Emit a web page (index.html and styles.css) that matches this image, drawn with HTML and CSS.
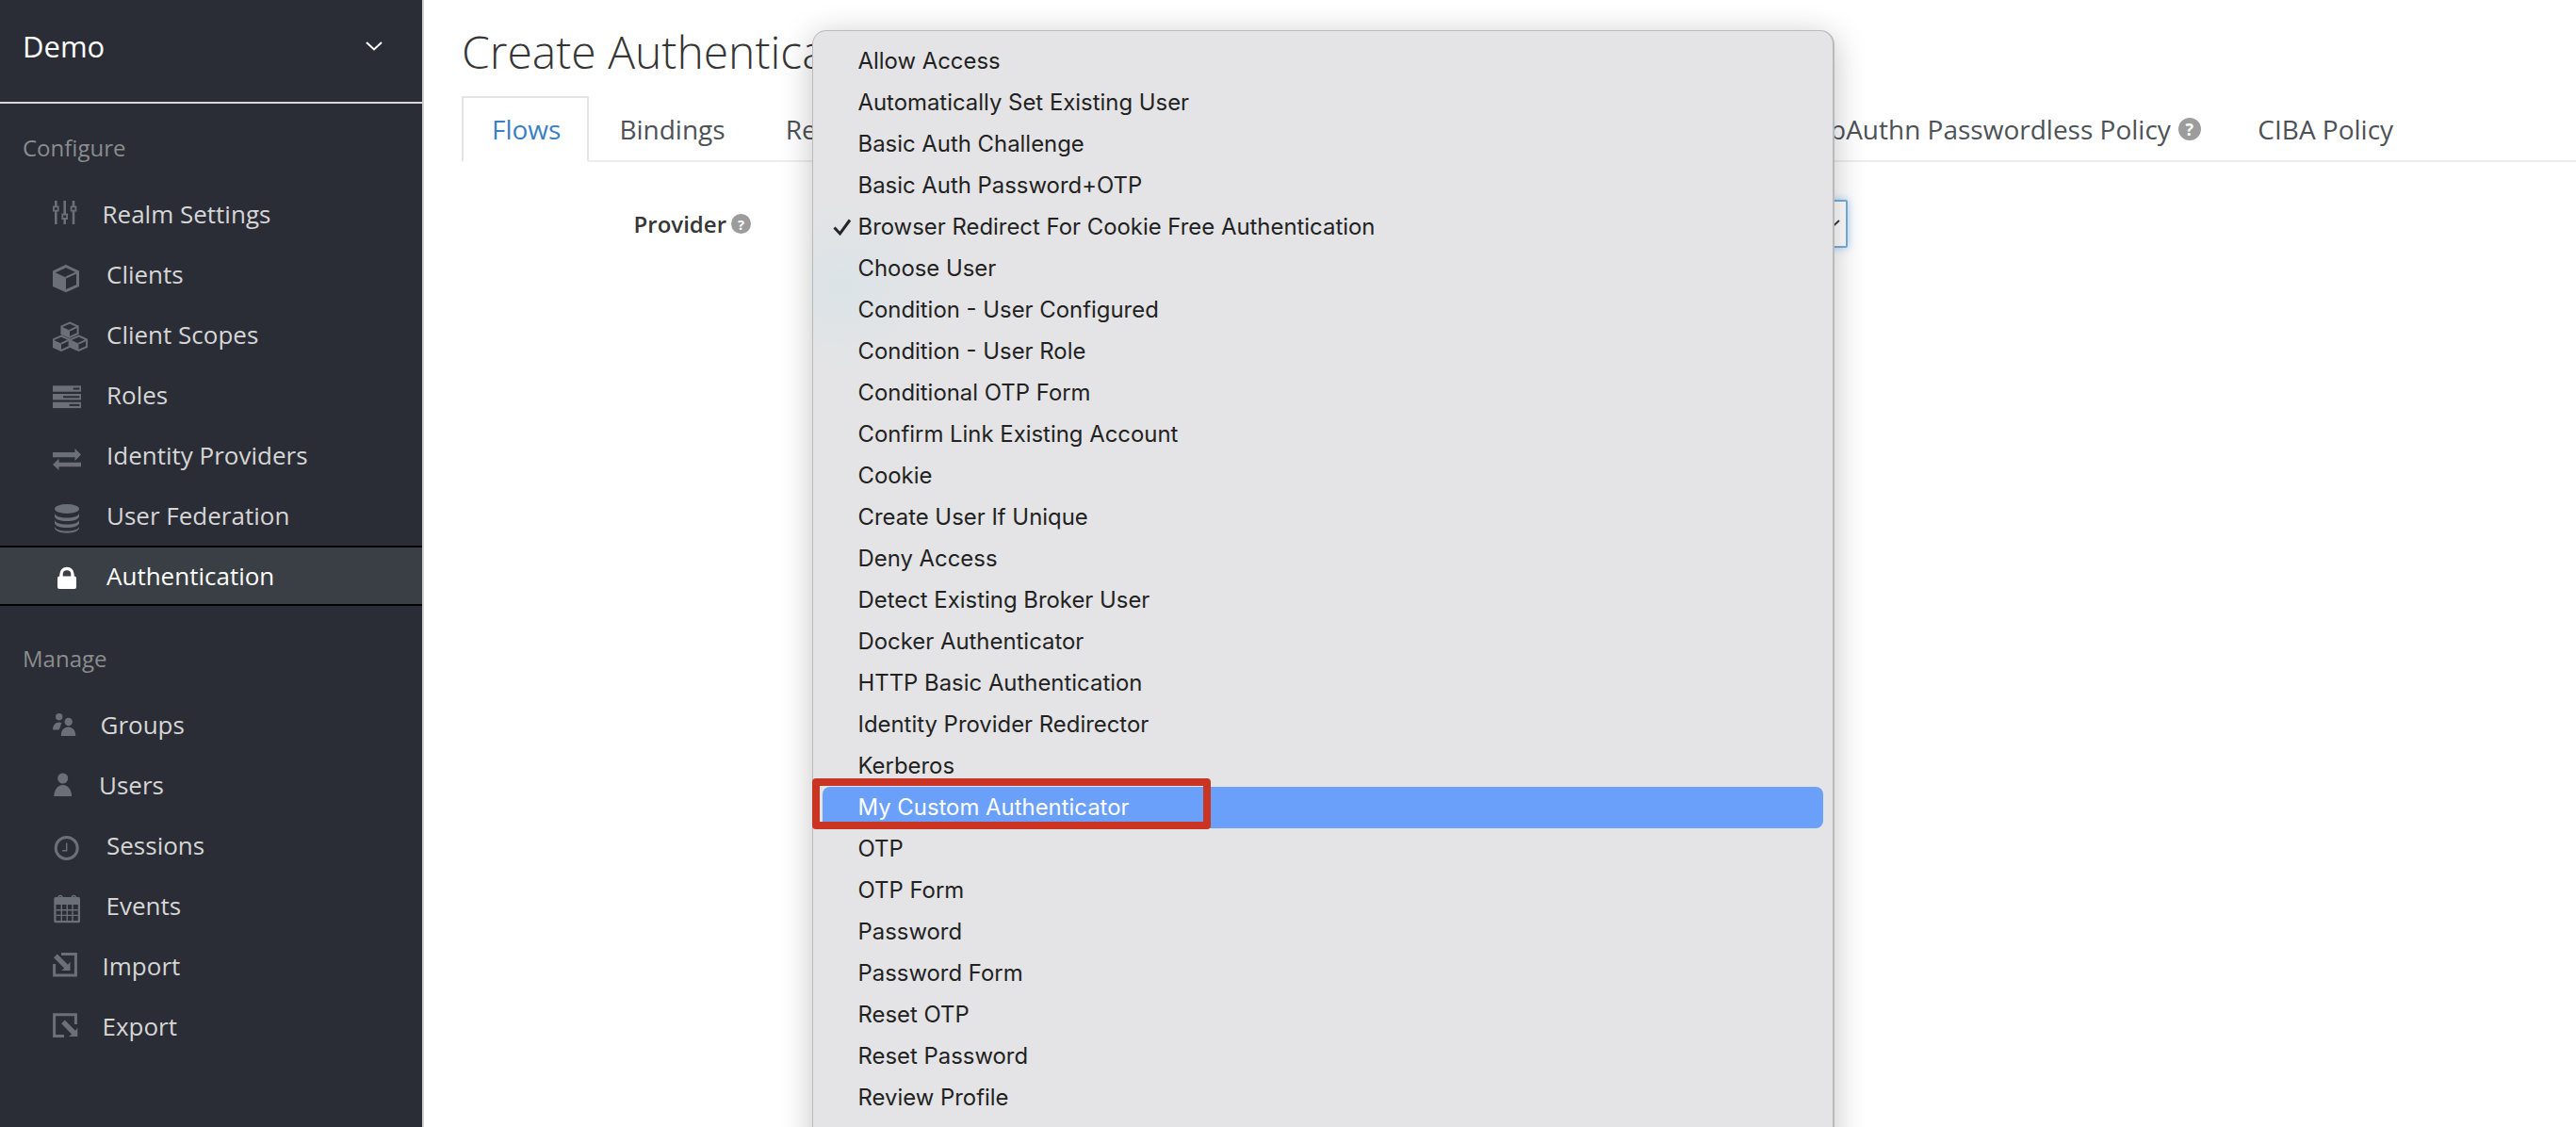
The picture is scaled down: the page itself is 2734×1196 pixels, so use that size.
FILE: index.html
```html
<!DOCTYPE html>
<html lang="en">
<head>
<meta charset="utf-8">
<title>Create Authenticator Execution</title>
<link rel="stylesheet" href="styles.css">
</head>
<body>
<div class="app">
  <aside class="sidebar">
    <header class="realm">
      <span class="realm-name">Demo</span>
      <svg class="realm-chevron" width="18" height="10" viewBox="0 0 18 10"><path d="M1 1l8 7.5L17 1" fill="none" stroke="#fff" stroke-width="2"/></svg>
    </header>
    <h2 class="section-title first">Configure</h2>
    <nav class="nav">
      <a class="nav-item to-54"><span class="nav-icon"><svg width="40" height="44" viewBox="0 0 40 44"><g class="ico"><rect x="2" y="8" width="2.6" height="25"/><rect x="11.400" y="8" width="2.6" height="25"/><rect x="20.700" y="8" width="2.6" height="25"/><rect x="0" y="13.500" width="6.600" height="6"/><rect x="9.400" y="21.500" width="6.600" height="6.500"/><rect x="18.700" y="13.500" width="6.600" height="6"/></g><g class="ico-knob"><rect x="1.800" y="15.300" width="3" height="2.400"/><rect x="11.200" y="23.500" width="3" height="2.500"/><rect x="20.500" y="15.300" width="3" height="2.400"/></g></svg></span><span>Realm Settings</span></a>
      <a class="nav-item to-57"><span class="nav-icon"><svg width="40" height="44" viewBox="0 0 40 44"><path class="ico-line" d="M14 13.5L26.5 19.5V34L14 39.5 1.5 34V19.5z"/><path class="ico" d="M1 19.5L14 25.5V40L1 34z"/><path class="ico-line thin" d="M14 25.5L27 19.5"/></svg></span><span>Clients</span></a>
      <a class="nav-item to-57"><span class="nav-icon"><svg width="40" height="44" viewBox="0 0 40 44"><defs><g id="cube"><path class="ico-line thin" d="M0-7.5L8.6-3.6V4L0 7.8-8.6 4V-3.6z"/><path class="ico" d="M-9-3.6L0 .6V8.6L-9 4.4z"/><path class="ico-line thin" d="M0 .6L9-3.6"/></g></defs><use href="#cube" x="18" y="17"/><use href="#cube" x="9" y="31"/><use href="#cube" x="27.5" y="31"/></svg></span><span>Client Scopes</span></a>
      <a class="nav-item to-57"><span class="nav-icon"><svg width="40" height="44" viewBox="0 0 40 44"><g class="ico"><rect x="0" y="12.3" width="30" height="6.4"/><rect x="0" y="21" width="30" height="6.4"/><rect x="0" y="29.7" width="30" height="6.4"/></g><g class="ico-knob"><rect x="21.7" y="14.5" width="6.6" height="2"/><rect x="11" y="23.2" width="17.3" height="2"/><rect x="17.7" y="31.9" width="10.6" height="2"/></g></svg></span><span>Roles</span></a>
      <a class="nav-item to-57"><span class="nav-icon"><svg width="40" height="44" viewBox="0 0 40 44"><path class="ico" d="M0 19H23.5V15L30 21.5 23.5 28V24.3H0zM30 29.7H6.5V25.7L0 32 6.5 38V34.3H30z"/></svg></span><span>Identity Providers</span></a>
      <a class="nav-item to-57"><span class="nav-icon"><svg width="40" height="44" viewBox="0 0 40 44"><ellipse class="ico" cx="15" cy="15" rx="13" ry="5"/><path class="ico" d="M2 19.5c0 3 6 5 13 5s13-2 13-5v3.5c0 3-6 5-13 5s-13-2-13-5zM2 26.5c0 3 6 5 13 5s13-2 13-5v3.5c0 3-6 5-13 5s-13-2-13-5zM2 33.5c0 3 6 5 13 5s13-2 13-5v1.5c0 3.5-6 5.7-13 5.7s-13-2.2-13-5.7z"/></svg></span><span>User Federation</span></a>
      <a class="nav-item active to-57"><span class="nav-icon"><svg width="40" height="44" viewBox="0 0 40 44"><path d="M9 23v-2.500c0-3.500 2.500-6 6-6s6 2.500 6 6V23" fill="none" stroke="#fff" stroke-width="3.400"/><rect x="5" y="22.500" width="20" height="13.500" rx="2" fill="#fff"/></svg></span><span>Authentication</span></a>
    </nav>
    <h2 class="section-title second">Manage</h2>
    <nav class="nav">
      <a class="nav-item to-51"><span class="nav-icon"><svg width="40" height="44" viewBox="0 0 40 44"><g class="ico"><circle cx="6.700" cy="13.700" r="3.700"/><circle cx="16.700" cy="19" r="4.200"/><path d="M8.800 34c0-6 3-9.500 7.700-9.500s7.700 3.500 7.700 9.500zM0 27.500C0 22.500 3 19.500 6.500 19.500c1 0 2 .3 3 .8-1.300 2.200-1 4-3 7.200z"/></g></svg></span><span>Groups</span></a>
      <a class="nav-item to-50"><span class="nav-icon"><svg width="40" height="44" viewBox="0 0 40 44"><g class="ico"><circle cx="10.700" cy="15" r="5.500"/><path d="M1.300 34c0-7 4-12 9.400-12s9.400 5 9.400 12z"/></g></svg></span><span>Users</span></a>
      <a class="nav-item to-57"><span class="nav-icon"><svg width="40" height="44" viewBox="0 0 40 44"><circle class="ico-line" cx="14.700" cy="25" r="11.500"/><path class="ico-line hair" d="M14.700 19.500v8.200h-4.500"/></svg></span><span>Sessions</span></a>
      <a class="nav-item to-58"><span class="nav-icon"><svg width="40" height="44" viewBox="0 0 40 44"><rect class="ico" x="1.300" y="13" width="27.700" height="27.300" rx="1.500"/><path class="ico-line hair" d="M6 18v-4.500a2 2 0 0 1 4 0V18M20.300 18v-4.500a2 2 0 0 1 4 0V18"/><rect class="ico-knob" x="3.500" y="21" width="23.300" height="17"/><path class="ico-line hair" d="M9.300 21v17M15.200 21v17M21 21v17M3.500 26.700h23.300M3.500 32.400h23.300"/></svg></span><span>Events</span></a>
      <a class="nav-item to-54"><span class="nav-icon"><svg width="40" height="44" viewBox="0 0 40 44"><path class="ico-line" d="M9 9.400H24.400V32H1.600V20"/><path class="ico" d="M4.800 9.500L16 20.700l2.500-3V27H9.200l3-2.500L1 13.300z"/></svg></span><span>Import</span></a>
      <a class="nav-item to-54"><span class="nav-icon"><svg width="40" height="44" viewBox="0 0 40 44"><path class="ico-line" d="M24.400 20V9.700H1.600V32.400H12"/><path class="ico" d="M12.800 15.500L24 26.700l2.300-3V33H17l3-2.500L9.200 19.300z"/></svg></span><span>Export</span></a>
    </nav>
  </aside>
  <main class="main">
    <h1 class="page-title">Create Authenticator Execution</h1>
    <ul class="tabs">
      <li class="tab current">Flows</li>
      <li class="tab">Bindings</li>
      <li class="tab">Required Actions</li>
      <li class="tab">Password Policy</li>
      <li class="tab tight">OTP Policy</li>
      <li class="tab">WebAuthn Policy <span class="help">?</span></li>
      <li class="tab narrow-end">WebAuthn Passwordless Policy <span class="help">?</span></li>
      <li class="tab">CIBA Policy</li>
    </ul>
    <form class="form">
      <label class="form-label">Provider <span class="help small">?</span></label>
      <div class="select"><svg width="18" height="10" viewBox="0 0 18 10"><path d="M1 1l8 7.500L17 1" fill="none" stroke="#333" stroke-width="1.800"/></svg></div>
    </form>
    <div class="menu">
      <div class="menu-item">Allow Access</div>
      <div class="menu-item">Automatically Set Existing User</div>
      <div class="menu-item">Basic Auth Challenge</div>
      <div class="menu-item">Basic Auth Password+OTP</div>
      <div class="menu-item"><svg class="check" width="20" height="20" viewBox="0 0 20 20"><path d="M1.500 10.500L7.500 17 18 2.500" fill="none" stroke="#262626" stroke-width="3"/></svg>Browser Redirect For Cookie Free Authentication</div>
      <div class="menu-item">Choose User</div>
      <div class="menu-item">Condition - User Configured</div>
      <div class="menu-item">Condition - User Role</div>
      <div class="menu-item">Conditional OTP Form</div>
      <div class="menu-item">Confirm Link Existing Account</div>
      <div class="menu-item">Cookie</div>
      <div class="menu-item">Create User If Unique</div>
      <div class="menu-item">Deny Access</div>
      <div class="menu-item">Detect Existing Broker User</div>
      <div class="menu-item">Docker Authenticator</div>
      <div class="menu-item">HTTP Basic Authentication</div>
      <div class="menu-item">Identity Provider Redirector</div>
      <div class="menu-item">Kerberos</div>
      <div class="menu-item selected">My Custom Authenticator<span class="annotation"></span></div>
      <div class="menu-item">OTP</div>
      <div class="menu-item">OTP Form</div>
      <div class="menu-item">Password</div>
      <div class="menu-item">Password Form</div>
      <div class="menu-item">Reset OTP</div>
      <div class="menu-item">Reset Password</div>
      <div class="menu-item">Review Profile</div>
    </div>
  </main>
</div>
</body>
</html>
```
FILE: styles.css
```css
* { box-sizing: border-box; }
html, body { margin: 0; height: 100%; overflow: hidden; }
body { font-family: "Open Sans", "Liberation Sans", sans-serif; background: #fff; color: #363636; }
.app { display: flex; height: 1196px; overflow: hidden; }

.sidebar { width: 450px; flex: none; background: #2a2d35; border-right: 2px solid #d1d1d1; color: #d6d6d6; }
.realm { height: 110px; display: flex; align-items: center; justify-content: space-between; padding: 0 42px 10px 24px; border-bottom: 2px solid #d8d8d8; }
.realm-name { font-size: 31px; color: #fff; }
.section-title { margin: 0; height: 74px; display: flex; align-items: center; padding: 0 0 3px 24px; font-size: 24px; font-weight: 400; color: #8a8c8e; }
.section-title.first { margin-top: 11px; }
.section-title.second { margin-top: 20px; }
.nav { display: flex; flex-direction: column; }
.nav-item { height: 64px; display: flex; align-items: center; padding-left: 56px; font-size: 26px; }
.nav-item.active { background: #393f44; color: #fff; border-top: 2px solid #030303; border-bottom: 2px solid #030303; }
.nav-icon { display: flex; flex: none; }
.to-50 .nav-icon { width: 49px; }
.to-51 .nav-icon { width: 50.500px; }
.to-54 .nav-icon { width: 52.500px; }
.to-57 .nav-icon { width: 57px; }
.to-58 .nav-icon { width: 56.500px; }
.ico { fill: #6b6f77; }
.ico-knob { fill: #2a2d35; }
.ico-line { fill: none; stroke: #6b6f77; stroke-width: 3; }
.ico-line.thin { stroke-width: 2; }
.ico-line.hair { stroke-width: 1.400; }

.main { flex: 1; position: relative; padding-left: 40px; min-width: 0; }
.page-title { margin: 0; height: 102px; padding-top: 7px; display: flex; align-items: center; font-size: 48px; font-weight: 300; color: #363636; white-space: nowrap; }
.tabs { list-style: none; margin: 0; padding: 0; height: 70px; display: flex; border-bottom: 2px solid #ededed; }
.tab { height: 70px; padding: 0 32px; display: flex; align-items: center; gap: 8px; font-size: 28px; color: #4d5258; white-space: nowrap; }
.tab.current { color: #3a7fc4; background: #fff; border: 2px solid #e4e4e4; border-bottom-color: #fff; padding: 0 28px 0 30px; }
.tab.tight { padding-right: 23.500px; }
.tab.narrow-end { padding-right: 28.500px; }
.help { width: 24px; height: 24px; border-radius: 50%; background: #9c9c9c; color: #fff; font-size: 18px; font-weight: 700; display: inline-flex; align-items: center; justify-content: center; flex: none; }
.help.small { width: 21px; height: 21px; font-size: 15px; margin-left: 5px; }

.form { display: grid; grid-template-columns: 307px 1084px; column-gap: 80px; margin-top: 40px; }
.form-label { height: 51px; display: flex; align-items: center; justify-content: flex-end; font-size: 24px; font-weight: 600; color: #363636; }
.select { height: 51px; display: flex; align-items: center; justify-content: flex-end; padding-right: 6px; border: 2px solid #78aede; border-radius: 2px; box-shadow: 0 0 10px rgba(102, 175, 233, .6); background: #fff; }

.menu { position: absolute; left: 412px; top: 32px; width: 1085px; height: 1240px; padding: 10px; background: radial-gradient(ellipse 110px 90px at 30px 270px, #dbe3e7, rgba(228, 228, 230, 0)), #e4e4e6; border: 1px solid #bababa; border-right-width: 2px; border-radius: 15px; box-shadow: 0 6px 34px rgba(0, 0, 0, .24); font-family: Inter, "Liberation Sans", sans-serif; font-size: 23.900px; color: #222; }
.menu-item { position: relative; height: 44px; display: flex; align-items: center; padding: 0 0 1px 37.500px; border-radius: 8px; white-space: nowrap; }
.menu-item.selected { background: #6a9ffa; color: #fff; }
.check { margin-left: -27px; margin-right: 7px; flex: none; }
.annotation { position: absolute; left: -11px; top: -9px; width: 423px; height: 54px; border: 8px solid #c93522; border-radius: 4px; }
```
